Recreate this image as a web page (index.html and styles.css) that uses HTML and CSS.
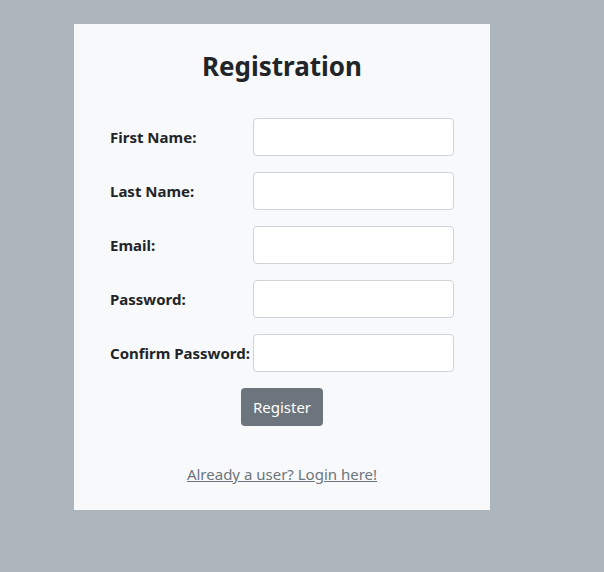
FILE: index.html
```html
<!DOCTYPE html>
<html>
<head>
<meta charset="utf-8">
<link rel="stylesheet" href="styles.css">
</head>
<body>
<div class="card">
  <h3 class="title">Registration</h3>
  <form class="form">
    <div class="row"><label>First Name:</label><input type="text"></div>
    <div class="row"><label>Last Name:</label><input type="text"></div>
    <div class="row"><label>Email:</label><input type="email"></div>
    <div class="row"><label>Password:</label><input type="password"></div>
    <div class="row"><label>Confirm Password:</label><input type="password"></div>
    <div class="actions"><button type="button" class="btn">Register</button></div>
  </form>
  <div class="footer"><a href="#" class="link">Already a user? Login here!</a></div>
</div>
</body>
</html>
```
FILE: styles.css
```css
html, body {
  margin: 0;
  padding: 0;
}
body {
  background: #adb5bd;
  font-family: "Noto Sans", "Open Sans", sans-serif;
  color: #212529;
  width: 604px;
  height: 572px;
  padding-top: 24px;
  padding-left: 74px;
  box-sizing: border-box;
}
.card {
  width: 416px;
  height: 486px;
  box-sizing: border-box;
  background: #f8f9fa;
  padding: 25px 36px 24px;
  display: flex;
  flex-direction: column;
}
.title {
  margin: 0;
  text-align: center;
  font-size: 26px;
  font-weight: 700;
  line-height: 34px;
}
.form {
  margin-top: 35px;
  display: flex;
  flex-direction: column;
  gap: 16px;
}
.row {
  display: flex;
  align-items: center;
  height: 38px;
}
.row label {
  width: 143px;
  font-size: 15px;
  font-weight: 700;
  white-space: nowrap;
}
.row input {
  width: 201px;
  height: 38px;
  box-sizing: border-box;
  border: 1px solid #ced4da;
  border-radius: 4px;
  background: #fff;
  margin: 0;
}
.actions {
  display: flex;
  justify-content: center;
}
.btn {
  width: 82px;
  height: 38px;
  border: none;
  border-radius: 4px;
  background: #6c757d;
  color: #fff;
  font-family: inherit;
  font-size: 15px;
  padding: 0;
}
.footer {
  margin-top: 36px;
  text-align: center;
  line-height: 24px;
}
.link {
  color: #6c757d;
  font-size: 15px;
}
```
